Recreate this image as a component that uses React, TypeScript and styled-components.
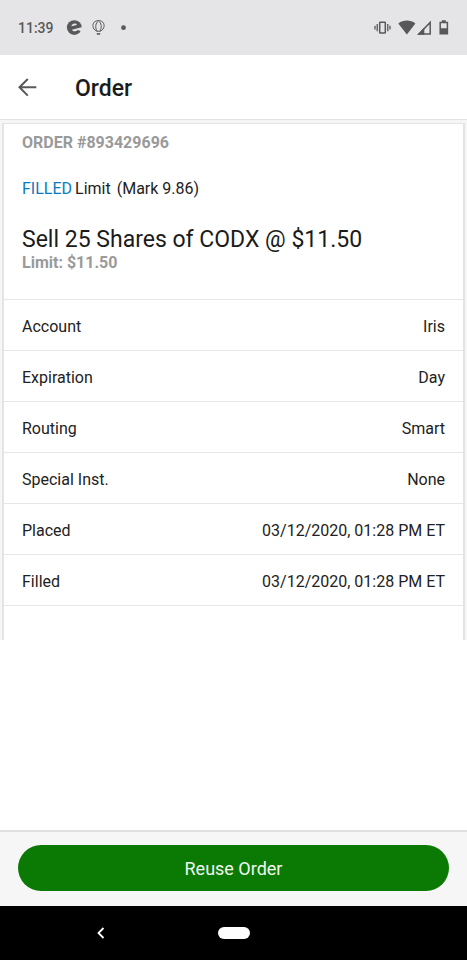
import React from "react";
import styled, { createGlobalStyle } from "styled-components";

const GlobalStyle = createGlobalStyle`
  *, *::before, *::after { box-sizing: border-box; }
  html, body, #root { height: 100%; }
  body {
    margin: 0;
    background: #fff;
    color: #222;
    font-family: Roboto, "Liberation Sans", sans-serif;
    font-size: 16px;
    line-height: 20px;
  }
  button { font: inherit; border: 0; padding: 0; background: none; cursor: pointer; }
`;

const Screen = styled.div`
  display: flex;
  flex-direction: column;
  min-height: 100%;
`;

const StatusBar = styled.div`
  display: flex;
  align-items: center;
  height: 55px;
  padding: 0 17px 0 18px;
  background: #e5e5e7;
  color: #58585a;
`;

const Clock = styled.time`
  margin-right: 11px;
  padding-top: 1px;
  font-size: 14px;
  font-weight: 500;
`;

const StatusIcons = styled.div<{ $end?: boolean }>`
  display: flex;
  align-items: center;
  margin-left: ${(p) => (p.$end ? "auto" : "0")};
  svg { display: block; }
`;

const AppBar = styled.header`
  display: flex;
  align-items: center;
  gap: 36px;
  height: 65px;
  padding: 0 16px;
  border-bottom: 1px solid #e2e2e2;
`;

const BackButton = styled.button`
  display: flex;
  width: 23px;
  height: 24px;
  color: #58585a;
`;

const Title = styled.h1`
  margin: 3px 0 0;
  font-size: 23px;
  line-height: 28px;
  font-weight: 500;
  color: #1b1b1b;
`;

const Content = styled.main`
  flex: 1;
`;

const CardBackdrop = styled.div`
  padding: 3px 2px 0;
  background: #f6f6f6;
`;

const Card = styled.article`
  padding-bottom: 34px;
  border: solid #e4e4e4;
  border-width: 1px 2px 0;
  background: #fff;
`;

const Summary = styled.section`
  padding: 9px 18px 26px;
  border-bottom: 1px solid #e6e6e6;
`;

const Muted = styled.p`
  margin: 0;
  font-weight: 700;
  color: #9a9a9a;
`;

const StatusLine = styled.p`
  display: flex;
  gap: 3px;
  margin: 26px 0 28px;
`;

const Mark = styled.span`
  margin-left: 3px;
`;

const Filled = styled.span`
  color: #087cbd;
`;

const Headline = styled.h2`
  margin: 0;
  font-size: 23px;
  line-height: 26px;
  font-weight: 400;
  color: #1b1b1b;
`;

const Details = styled.dl`
  margin: 0;
`;

const DetailRow = styled.div`
  display: flex;
  align-items: center;
  justify-content: space-between;
  min-height: 51px;
  padding: 4px 18px 0;
  border-bottom: 1px solid #e6e6e6;
`;

const Term = styled.dt`
  margin: 0;
`;

const Value = styled.dd`
  margin: 0;
  text-align: right;
`;

const ActionBar = styled.footer`
  padding: 13px 18px 15px;
  border-top: 2px solid #e0e0e0;
  background: #f6f6f6;
`;

const PrimaryButton = styled.button`
  display: block;
  width: 100%;
  height: 46px;
  padding-top: 2px;
  border-radius: 23px;
  && { background: #0a7a05; }
  color: #f1f8f0;
  font-size: 18px;
`;

const SystemNav = styled.nav`
  display: grid;
  grid-template-columns: 1fr 32px 1fr;
  align-items: center;
  height: 54px;
  background: #000;
`;

const NavBack = styled.button`
  display: flex;
  justify-self: center;
  margin-right: 16px;
  color: #fff;
`;

const HomePill = styled.button`
  height: 12px;
  border-radius: 6px;
  && { background: #fff; }
`;

const rows = [
  ["Account", "Iris"],
  ["Expiration", "Day"],
  ["Routing", "Smart"],
  ["Special Inst.", "None"],
  ["Placed", "03/12/2020, 01:28 PM ET"],
  ["Filled", "03/12/2020, 01:28 PM ET"],
];

const NotificationIcons = () => (
  <svg width="64" height="20" viewBox="0 0 64 20" fill="none" stroke="currentColor" aria-hidden="true">
    <circle cx="9.3" cy="9.6" r="7.4" fill="currentColor" stroke="none" />
    <path d="M6.4 8.3C6.8 5.2 11.2 4.8 11.8 6.9Z" fill="#e5e5e7" stroke="none" />
    <path d="M7 11.7 17.5 9v4.2L15.4 13 12.8 12C11 13.8 7.8 13.7 7 11.7Z" fill="#e5e5e7" stroke="none" />
    <g strokeWidth="1">
      <path d="M31.5 13.2C27.4 10.8 27 6.5 29.2 4.2C31.2 2 35.8 2 37.8 4.2C40 6.5 39.6 10.8 35.5 13.2Z" />
      <path d="M32 13.2C29.8 9 30.6 5.2 33.5 2.8C36.4 5.2 37.2 9 35 13.2" />
      <path d="M31.8 15.9h3.4" strokeWidth="1.6" />
    </g>
    <circle cx="58.5" cy="9.7" r="2.4" fill="currentColor" stroke="none" />
  </svg>
);

const SystemIcons = () => (
  <svg width="76" height="20" viewBox="0 0 76 20" fill="none" stroke="currentColor" aria-hidden="true">
    <rect x="5.7" y="4.2" width="5.6" height="10.8" rx="0.5" strokeWidth="1.5" />
    <path d="M3.2 6v7.2M13.8 6v7.2M1 7.8v3.6M16 7.8v3.6" strokeWidth="1.3" />
    <path d="M24.3 5.4C29.5 1.6 36.5 1.6 41.4 5.4L32.9 16.6Z" fill="currentColor" stroke="none" />
    <path d="M45 16 56.2 4.4V16Z" strokeWidth="1.5" />
    <path d="M43.2 16.7 50.3 9.6v7.1Z" fill="currentColor" stroke="none" />
    <path d="M66.2 4.4h7.2v11.4h-7.2Z" strokeWidth="1.5" />
    <path d="M67.8 2.2h4v2.2h-4ZM66.2 10.2h7.2v5.6h-7.2Z" fill="currentColor" stroke="none" />
  </svg>
);

export default function App() {
  return (
    <>
      <GlobalStyle />
      <Screen>
        <StatusBar>
          <Clock>11:39</Clock>
          <StatusIcons><NotificationIcons /></StatusIcons>
          <StatusIcons $end><SystemIcons /></StatusIcons>
        </StatusBar>
        <AppBar>
          <BackButton type="button" aria-label="Back">
            <svg width="23" height="24" viewBox="0 0 23 24" fill="none" stroke="currentColor" strokeWidth="2" aria-hidden="true">
              <path d="M20.3 12.3H3.7M11.8 4 3.5 12.3l8.3 8.3" />
            </svg>
          </BackButton>
          <Title>Order</Title>
        </AppBar>
        <Content>
          <CardBackdrop>
            <Card>
              <Summary>
                <Muted>ORDER #893429696</Muted>
                <StatusLine>
                  <Filled>FILLED</Filled>
                  <span>Limit</span>
                  <Mark>(Mark 9.86)</Mark>
                </StatusLine>
                <Headline>Sell 25 Shares of CODX @ $11.50</Headline>
                <Muted>Limit: $11.50</Muted>
              </Summary>
              <Details>
                {rows.map(([label, value]) => (
                  <DetailRow key={label}>
                    <Term>{label}</Term>
                    <Value>{value}</Value>
                  </DetailRow>
                ))}
              </Details>
            </Card>
          </CardBackdrop>
        </Content>
        <ActionBar>
          <PrimaryButton type="button">Reuse Order</PrimaryButton>
        </ActionBar>
        <SystemNav aria-label="System">
          <NavBack type="button" aria-label="System back">
            <svg width="8" height="12" viewBox="0 0 8 12" fill="none" stroke="currentColor" strokeWidth="1.8" aria-hidden="true">
              <path d="M6.5 1 1.5 6l5 5" />
            </svg>
          </NavBack>
          <HomePill type="button" aria-label="Home" />
        </SystemNav>
      </Screen>
    </>
  );
}
